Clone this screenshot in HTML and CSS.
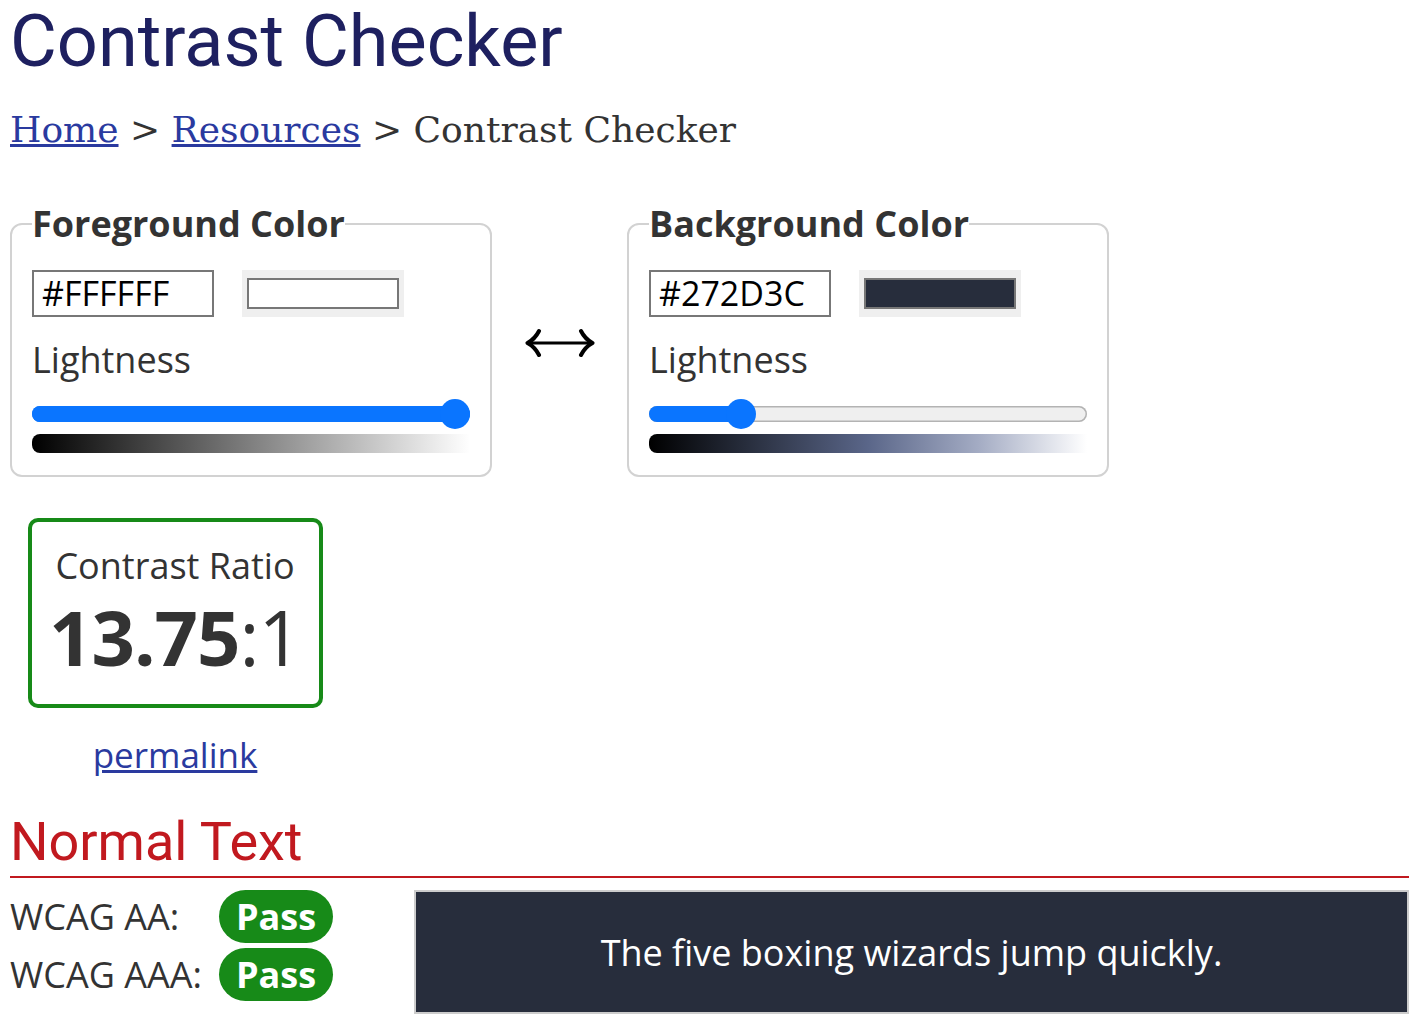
FILE: index.html
```html
<!DOCTYPE html>
<html lang="en">
<head>
<meta charset="utf-8">
<title>Contrast Checker</title>
<link rel="stylesheet" href="styles.css">
</head>
<body>
<h1 class="title">Contrast Checker</h1>
<nav class="crumbs"><a href="#">Home</a> &gt; <a href="#">Resources</a> &gt; Contrast Checker</nav>

<div class="pickers">
  <fieldset class="picker">
    <legend class="legend">Foreground Color</legend>
    <div class="color-row">
      <div class="hex">#FFFFFF</div>
      <div class="swatch-wrap"><div class="swatch swatch-fg"></div></div>
    </div>
    <div class="light-label">Lightness</div>
    <div class="track">
      <div class="fill" style="width:100%"></div>
      <div class="thumb" style="left:calc(100% - 30px)"></div>
    </div>
    <div class="grad grad-fg"></div>
  </fieldset>

  <div class="swap">
    <svg width="70" height="30" viewBox="0 0 70 30" aria-hidden="true">
      <path d="M5 15 H65" stroke="#000" stroke-width="3.2" fill="none"/>
      <path d="M14 3 Q10 11 2.5 15 Q10 19 14 27" stroke="#000" stroke-width="4" fill="none" stroke-linecap="round" stroke-linejoin="round"/>
      <path d="M56 3 Q60 11 67.5 15 Q60 19 56 27" stroke="#000" stroke-width="4" fill="none" stroke-linecap="round" stroke-linejoin="round"/>
    </svg>
  </div>

  <fieldset class="picker">
    <legend class="legend">Background Color</legend>
    <div class="color-row">
      <div class="hex">#272D3C</div>
      <div class="swatch-wrap"><div class="swatch swatch-bg"></div></div>
    </div>
    <div class="light-label">Lightness</div>
    <div class="track track-empty">
      <div class="fill" style="width:92px"></div>
      <div class="thumb" style="left:77px"></div>
    </div>
    <div class="grad grad-bg"></div>
  </fieldset>
</div>

<div class="ratio-col">
  <div class="ratio-box">
    <div class="ratio-label">Contrast Ratio</div>
    <div class="ratio-value"><b>13.75</b>:1</div>
  </div>
  <a class="permalink" href="#">permalink</a>
</div>

<h2 class="section">Normal Text</h2>
<div class="results">
  <div class="levels">
    <div class="level"><span class="level-name">WCAG AA:</span><span class="pill">Pass</span></div>
    <div class="level"><span class="level-name">WCAG AAA:</span><span class="pill">Pass</span></div>
  </div>
  <div class="sample">The five boxing wizards jump quickly.</div>
</div>
</body>
</html>
```

FILE: styles.css
```css
html, body { background: #fff; }
body {
  margin: 0;
  padding: 0 6px 0 10px;
  font-family: "Open Sans", "Noto Sans", sans-serif;
  color: #333;
}
a { color: #2a3a9f; }

.title {
  font-family: Roboto, "Liberation Sans", sans-serif;
  font-weight: 400;
  font-size: 72px;
  line-height: 84px;
  color: #1e2060;
  margin: 0;
  padding: 0;
}

.crumbs {
  font-family: "DejaVu Serif", "Liberation Serif", serif;
  font-size: 36px;
  line-height: 44px;
  margin-top: 24px;
  color: #333;
}
.crumbs a { color: #2a3a9f; }

.pickers {
  display: flex;
  align-items: center;
  margin-top: 49px;
}
.picker {
  width: 438px;
  margin: 0;
  border: 2px solid #d2d2d2;
  border-radius: 12px;
  padding: 23px 20px 22px 20px;
}
.legend {
  padding: 0;
  font-weight: 700;
  font-size: 36px;
  line-height: 46px;
  color: #333;
}
.color-row { display: flex; gap: 28px; }
.hex {
  width: 170px;
  height: 43px;
  border: 2px solid #777;
  padding-left: 8px;
  font-size: 34px;
  line-height: 43px;
  color: #000;
}
.swatch-wrap {
  width: 152px;
  height: 31px;
  padding: 8px 5px;
  background: #efefef;
}
.swatch {
  height: 27px;
  border: 2px solid #777;
}
.swatch-fg { background: #fff; }
.swatch-bg { background: #272d3c; }

.light-label {
  font-size: 36px;
  line-height: 48px;
  margin-top: 19px;
  color: #333;
}
.track {
  position: relative;
  height: 16px;
  margin-top: 22px;
  border-radius: 8px;
  background: #0a75ff;
}
.track-empty {
  background: #efefef;
  box-shadow: inset 0 0 0 1.5px #b3b3b3;
}
.fill {
  height: 16px;
  border-radius: 8px;
  background: #0a75ff;
}
.thumb {
  position: absolute;
  top: -7px;
  width: 30px;
  height: 30px;
  border-radius: 50%;
  background: #0a75ff;
}
.grad {
  height: 19px;
  margin-top: 12px;
  border-radius: 8px 0 0 8px;
}
.grad-fg { background: linear-gradient(to right, #000, #fff); }
.grad-bg { background: linear-gradient(to right, #000 0%, #272d3c 22%, #5a6689 50%, #a3abc3 75%, #fff 100%); }

.swap {
  width: 135px;
  display: flex;
  justify-content: center;
  padding-top: 8px;
}

.ratio-col {
  width: 330px;
  display: flex;
  flex-direction: column;
  align-items: center;
  margin-top: 41px;
}
.ratio-box {
  width: 287px;
  height: 182px;
  border: 4px solid #178a18;
  border-radius: 10px;
  text-align: center;
}
.ratio-label {
  font-size: 36px;
  line-height: 46px;
  margin-top: 21px;
}
.ratio-value {
  font-size: 76px;
  line-height: 80px;
  margin-top: 8px;
  letter-spacing: -1px;
}
.ratio-value b { font-weight: 700; }
.permalink {
  font-size: 35px;
  line-height: 46px;
  margin-top: 24px;
}

.section {
  font-family: Roboto, "Liberation Sans", sans-serif;
  font-weight: 400;
  font-size: 54px;
  line-height: 64px;
  color: #c1191f;
  margin: 32px 0 0 0;
  padding-bottom: 2px;
  border-bottom: 2px solid #c1191f;
}

.results {
  display: flex;
  margin-top: 12px;
}
.levels {
  width: 404px;
  display: flex;
  flex-direction: column;
  gap: 5px;
}
.level {
  display: flex;
  align-items: center;
  height: 53px;
}
.level-name {
  width: 209px;
  font-size: 36px;
  color: #333;
}
.pill {
  width: 114px;
  height: 53px;
  border-radius: 27px;
  background: #178a18;
  color: #fff;
  font-weight: 700;
  font-size: 36px;
  line-height: 53px;
  text-align: center;
}
.sample {
  flex: 1;
  height: 120px;
  background: #272d3c;
  border: 2px solid #ccc;
  color: #fff;
  font-size: 36px;
  display: flex;
  align-items: center;
  justify-content: center;
}
```
